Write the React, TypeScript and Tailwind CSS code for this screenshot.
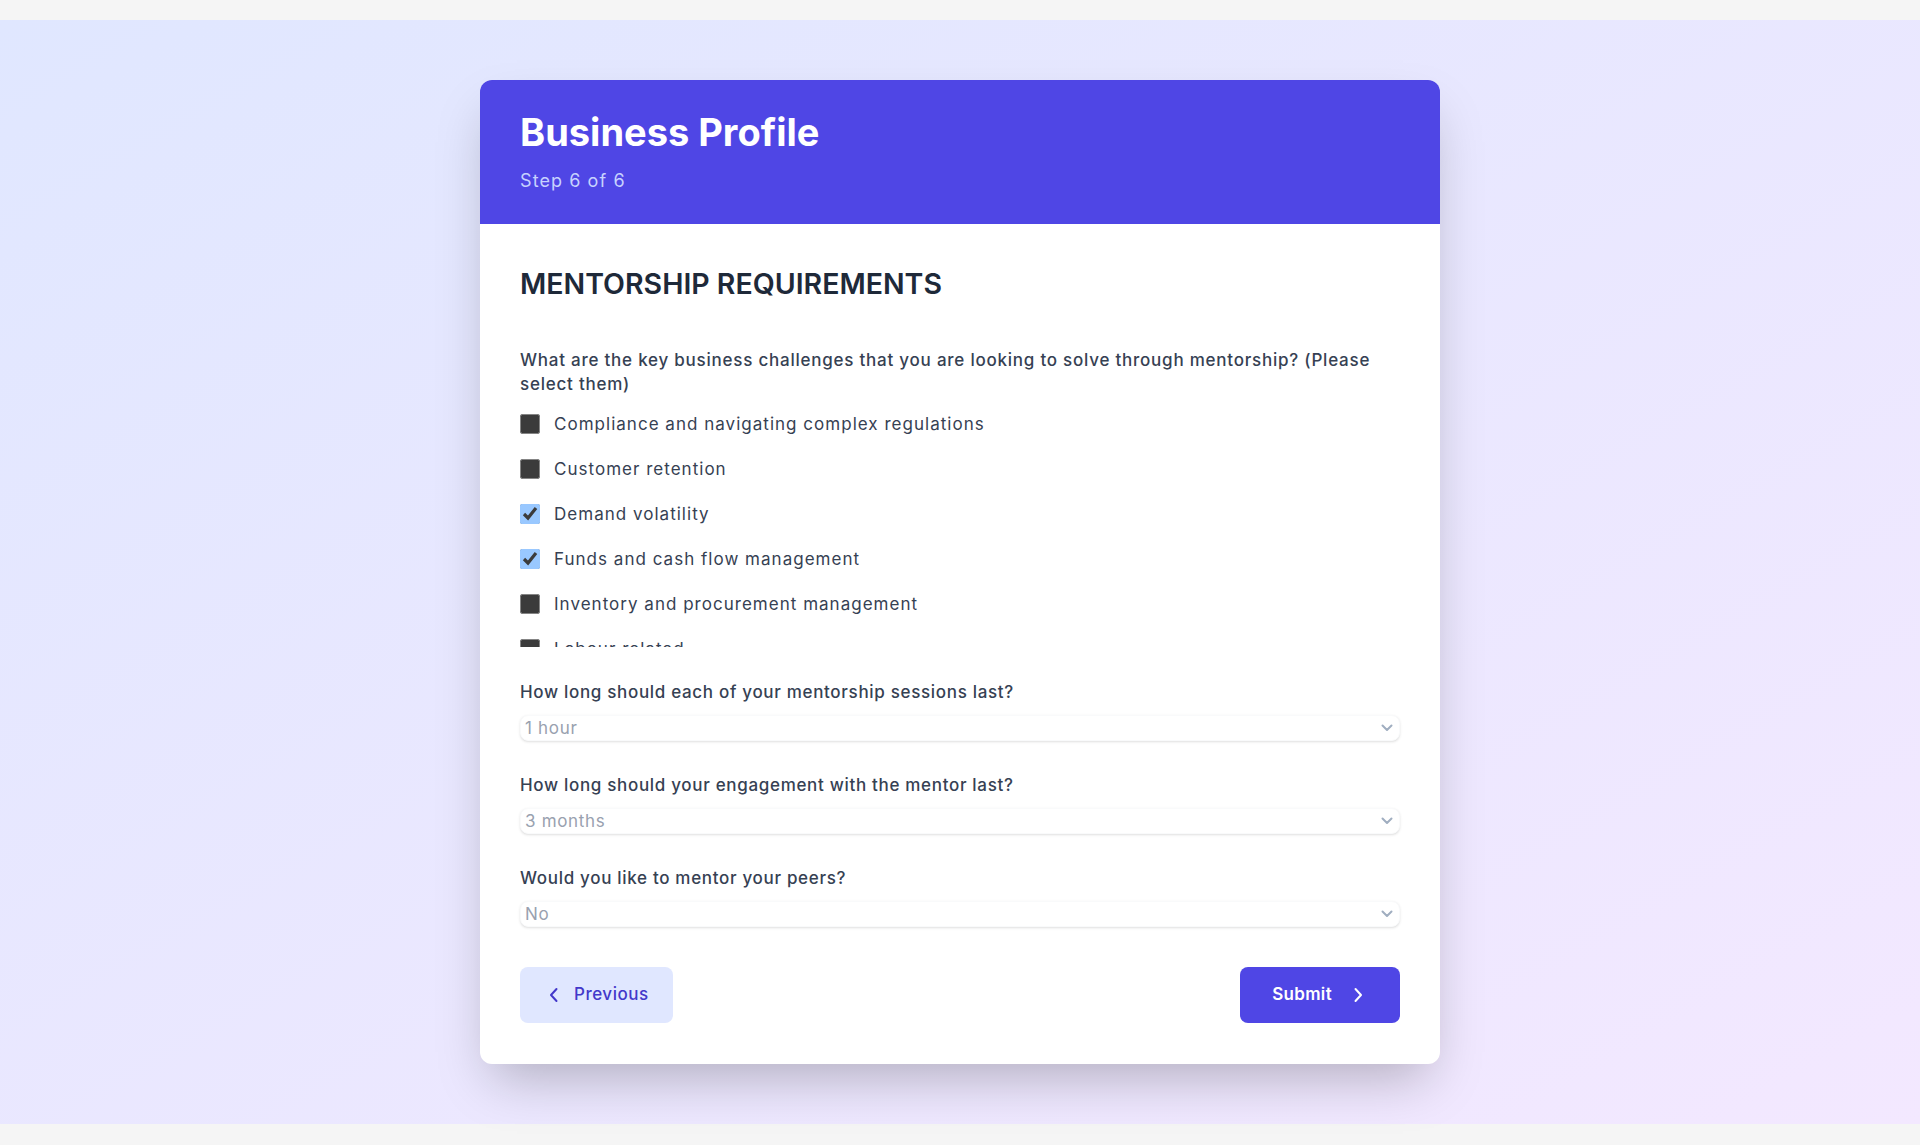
import React from 'react';

const challenges = [
  { label: 'Compliance and navigating complex regulations', checked: false },
  { label: 'Customer retention', checked: false },
  { label: 'Demand volatility', checked: true },
  { label: 'Funds and cash flow management', checked: true },
  { label: 'Inventory and procurement management', checked: false },
  { label: 'Labour related', checked: false },
];

const selects = [
  { label: 'How long should each of your mentorship sessions last?', value: '1 hour' },
  { label: 'How long should your engagement with the mentor last?', value: '3 months' },
  { label: 'Would you like to mentor your peers?', value: 'No' },
];

const SelectChevron = () => (
  <svg width="12" height="8" viewBox="0 0 12 8" fill="none" className="text-[#a0aec0]">
    <path d="M1.5 1.5 L6 6 L10.5 1.5" stroke="currentColor" strokeWidth="2" strokeLinecap="round" strokeLinejoin="round" />
  </svg>
);

const ChevronLeft = () => (
  <svg width="20" height="20" viewBox="0 0 20 20" fill="none">
    <path d="M12.5 4 L7 10 L12.5 16" stroke="currentColor" strokeWidth="2" strokeLinecap="round" strokeLinejoin="round" />
  </svg>
);

const ChevronRight = () => (
  <svg width="20" height="20" viewBox="0 0 20 20" fill="none">
    <path d="M7.5 4 L13 10 L7.5 16" stroke="currentColor" strokeWidth="2" strokeLinecap="round" strokeLinejoin="round" />
  </svg>
);

const App: React.FC = () => {
  return (
    <div className="min-h-screen bg-neutral-100 py-5 font-['Inter','Noto_Sans',sans-serif]">
      <div className="bg-linear-to-br from-[#e0e7ff] to-[#f3e8ff] py-15">
        <div className="mx-auto w-[960px] overflow-hidden rounded-xl bg-white shadow-2xl">
          <div className="bg-[#4f46e5] px-10 pt-8 pb-[29px]">
            <h1 className="text-[38px] leading-10 font-bold text-white">Business Profile</h1>
            <p className="mt-[15px] text-lg leading-7 tracking-[0.06em] text-[#c7d2fe]">Step 6 of 6</p>
          </div>

          <div className="px-10 pt-[42px] pb-[41px]">
            <h2 className="mb-[46px] text-[28.5px] leading-9 font-semibold text-gray-800">MENTORSHIP REQUIREMENTS</h2>

            <p className="text-[17px] leading-6 font-medium tracking-[0.045em] text-gray-700">
              What are the key business challenges that you are looking to solve through mentorship? (Please
              select them)
            </p>
            {/* scrolled list, last row cut by the box */}
            <div className="mt-4 flex h-[235px] flex-col gap-[21px] overflow-hidden">
              {challenges.map((c) => (
                <label
                  key={c.label}
                  className="flex h-6 shrink-0 items-center gap-[14px] text-[17px] leading-6 tracking-[0.06em] text-gray-700"
                >
                  <input
                    type="checkbox"
                    defaultChecked={c.checked}
                    className="m-0 h-5 w-5 shrink-0 [color-scheme:dark]"
                  />
                  <span>{c.label}</span>
                </label>
              ))}
            </div>

            <div className="mt-[33px] flex flex-col gap-8">
              {selects.map((s) => (
                <div key={s.label}>
                  <p className="text-[17px] leading-6 font-medium tracking-[0.04em] text-gray-700">{s.label}</p>
                  <div className="mt-[11px] flex items-center justify-between rounded-lg border border-gray-50 bg-white pr-1.5 pl-1 shadow-sm">
                    <span className="text-[17px] leading-6 tracking-[0.04em] text-gray-400">{s.value}</span>
                    <SelectChevron />
                  </div>
                </div>
              ))}
            </div>

            <div className="mt-10 flex items-center justify-between">
              <button className="flex h-14 items-center gap-[10px] rounded-lg bg-[#e0e7ff] px-6 text-[17px] font-medium tracking-[0.03em] text-[#4338ca]">
                <ChevronLeft />
                Previous
              </button>
              <button className="flex h-14 items-center gap-4 rounded-lg bg-[#4f46e5] px-8 text-[17px] font-semibold tracking-[0.02em] text-white">
                Submit
                <ChevronRight />
              </button>
            </div>
          </div>
        </div>
      </div>
    </div>
  );
};

export default App;
